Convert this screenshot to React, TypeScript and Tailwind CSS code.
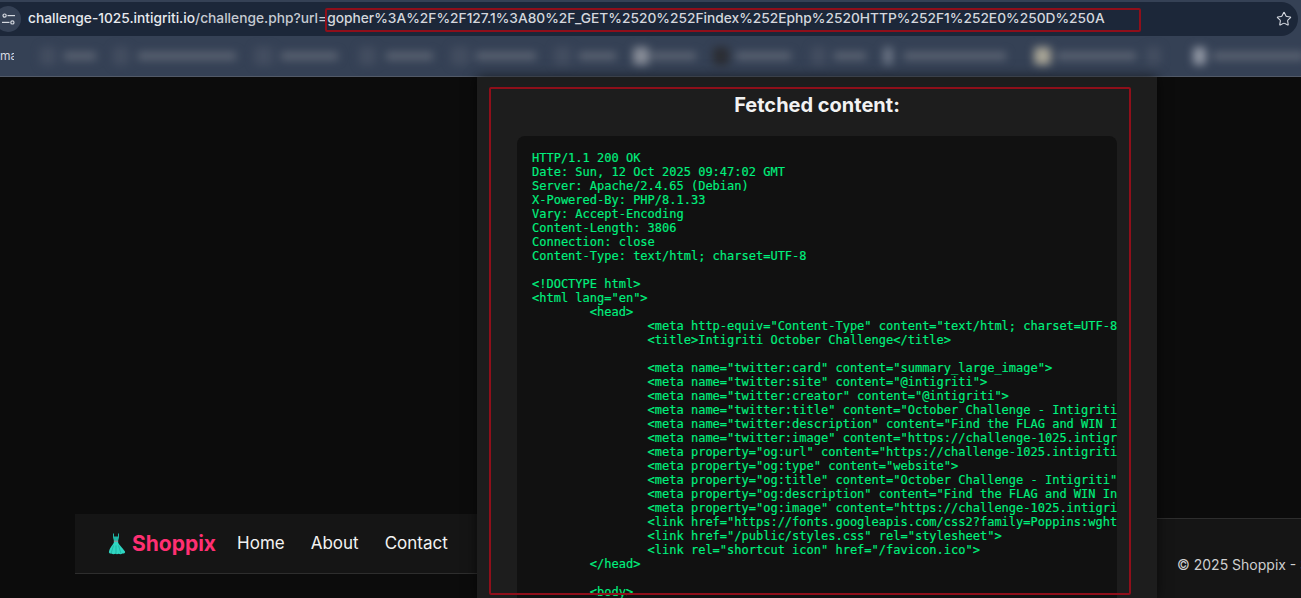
import React from "react";
import { Star } from "lucide-react";

const MONO = "font-['DejaVu_Sans_Mono',monospace]";
const HEADING = "font-['Inter','Noto_Sans',sans-serif]";

// blurred bookmarks, left to right
const BOOKMARKS_LEFT = [
  { icon: "ml-[26px] w-[16px] bg-[#434d60]", text: "ml-[8px] w-[32px]" },
  { icon: "ml-[17px] w-[16px] bg-[#434d60]", text: "ml-[9px] w-[98px]" },
  { icon: "ml-[18px] w-[19px] bg-[#434d60]", text: "ml-[8px] w-[57px]" },
  { icon: "ml-[21px] w-[17px] bg-[#434d60]", text: "ml-[10px] w-[47px]" },
  { icon: "ml-[18px] w-[18px] bg-[#434d60]", text: "ml-[7px] w-[60px]" },
  { icon: "ml-[18px] w-[17px] bg-[#434d60]", text: "ml-[8px] w-[37px]" },
  { icon: "ml-[17px] w-[16px] bg-[#878c97]", text: "ml-[2px] w-[45px]" },
  { icon: "ml-[17px] w-[16px] bg-[#2b2d33]", text: "ml-[7px] w-[55px]" },
  { icon: "ml-[20px] w-[15px] bg-[#434d60]", text: "ml-[8px] w-[32px]" },
  { icon: "ml-[17px] w-[10px] bg-[#6a7383]", text: "ml-[11px] w-[102px]" },
  { icon: "ml-[28px] w-[17px] bg-[#a8a496]", text: "ml-[6px] w-[79px]" },
  { icon: "ml-[10px] w-[15px] bg-[#434d60]", text: "ml-[0px] w-[0px]" },
  { icon: "ml-[32px] w-[13px] bg-[#9096a3]", text: "ml-[7px] w-[91px]" },
];

const RESPONSE = `HTTP/1.1 200 OK
Date: Sun, 12 Oct 2025 09:47:02 GMT
Server: Apache/2.4.65 (Debian)
X-Powered-By: PHP/8.1.33
Vary: Accept-Encoding
Content-Length: 3806
Connection: close
Content-Type: text/html; charset=UTF-8

<!DOCTYPE html>
<html lang="en">
\t<head>
\t\t<meta http-equiv="Content-Type" content="text/html; charset=UTF-8">
\t\t<title>Intigriti October Challenge</title>

\t\t<meta name="twitter:card" content="summary_large_image">
\t\t<meta name="twitter:site" content="@intigriti">
\t\t<meta name="twitter:creator" content="@intigriti">
\t\t<meta name="twitter:title" content="October Challenge - Intigriti">
\t\t<meta name="twitter:description" content="Find the FLAG and WIN Intigriti swag">
\t\t<meta name="twitter:image" content="https://challenge-1025.intigriti.io/share.png">
\t\t<meta property="og:url" content="https://challenge-1025.intigriti.io/">
\t\t<meta property="og:type" content="website">
\t\t<meta property="og:title" content="October Challenge - Intigriti">
\t\t<meta property="og:description" content="Find the FLAG and WIN Intigriti swag">
\t\t<meta property="og:image" content="https://challenge-1025.intigriti.io/share.png">
\t\t<link href="https://fonts.googleapis.com/css2?family=Poppins:wght@400;600&display=swap" rel="stylesheet">
\t\t<link href="/public/styles.css" rel="stylesheet">
\t\t<link rel="shortcut icon" href="/favicon.ico">
\t</head>

\t<body>
\t\t<div class="container">`;

function TuneIcon() {
  return (
    <svg width="13" height="12" viewBox="0 0 13 12" fill="none" stroke="#d5d9e0" strokeWidth="1.2">
      <circle cx="2.6" cy="2.6" r="1.6" />
      <path d="M5.500 2.600H13" />
      <circle cx="10.400" cy="9.400" r="1.600" />
      <path d="M0 9.400h7.500" />
    </svg>
  );
}

function DressIcon() {
  return (
    <svg width="22" height="22" viewBox="0 0 22 22">
      <path d="M8 0.500v4l1 3.500h4l1-3.500v-4h-1v3H9v-3z" fill="#1fb5a5" />
      <rect x="8.800" y="7.600" width="4.400" height="1.600" fill="#7d9a9e" />
      <path d="M9 9h4c.6 2.500 4 5 7 9.500.5 1.200-.8 2.300-2.500 2-1 .9-2.800.9-3.800.3-1 .6-2.400.6-3.400 0-1 .6-2.800.6-3.800-.3-1.700.3-3-.8-2.500-2C5 14 8.400 11.500 9 9z" fill="#2fd6c2" />
      <path d="M8.500 12.500l-2.500 8M11 12.500V21M13.500 12.500l2.500 8" stroke="#1aa999" strokeWidth=".7" />
    </svg>
  );
}

function BrowserChrome() {
  return (
    <div className="h-[77px] bg-[#354155] border-b border-[#525a68] overflow-hidden">
      <div className="h-[36px] pt-[2px]">
        <div className="relative h-[34px] mr-[3px] rounded-r-[17px] bg-[#1c2739] flex items-center">
          <div className="ml-[-5px] w-[26px] h-[26px] rounded-full bg-[#354155] flex items-center justify-center shrink-0">
            <TuneIcon />
          </div>
          <div className="ml-[7px] mt-[-1px] text-[13.75px] font-medium whitespace-nowrap font-['Inter',sans-serif] text-[#e8eaee]">
            challenge-1025.intigriti.io
            <span className="text-[#c6cad2]">/challenge.php?url=</span>
            <span className="text-[#d4d7dd]">gopher%3A%2F%2F127.1%3A80%2F_GET%2520%252Findex%252Ephp%2520HTTP%252F1%252E0%250D%250A</span>
          </div>
          <Star size={16} strokeWidth={1.6} className="absolute left-[1276px] top-[9px] text-[#d5d9e0]" />
          <div className="absolute left-[325px] top-[6px] w-[816px] h-[24px] border-2 border-[#8f0f1a] rounded-[2px]" />
        </div>
      </div>
      <div className="h-[40px] flex items-center">
        <span className="w-[14px] shrink-0 text-[12px] font-['Inter',sans-serif] text-[#d5d9e0] overflow-hidden">mas</span>
        <div className="flex items-center blur-[4px]">
          {BOOKMARKS_LEFT.map((b, i) => (
            <React.Fragment key={i}>
              <span className={`${b.icon} h-[18px] rounded-[4px] shrink-0`} />
              <span className={`${b.text} h-[8px] bg-[#5c6473] shrink-0`} />
            </React.Fragment>
          ))}
        </div>
      </div>
    </div>
  );
}

export default function App() {
  return (
    <div className="w-[1301px] h-[598px] overflow-hidden bg-[#0c0c0c] flex flex-col">
      <BrowserChrome />
      <div className="flex-1 flex min-h-0">
        <div className="w-[477px] shrink-0 pl-[75px] pt-[437px]">
          <nav className="h-[60px] bg-[#151515] border-b border-[#2e2e2e] flex items-center pl-[30px] text-[#f2f2f2] whitespace-nowrap">
            <DressIcon />
            <span className={`${HEADING} ml-[5px] text-[21px] font-bold text-[#ff2f72]`}>Shoppix</span>
            <a className={`${HEADING} ml-[21px] text-[17px]`}>Home</a>
            <a className={`${HEADING} ml-[26px] text-[17px]`}>About</a>
            <a className={`${HEADING} ml-[26px] text-[17px]`}>Contact</a>
          </nav>
        </div>

        <main className="relative z-10 w-[680px] shrink-0 bg-[#1d1d1d] shadow-[0_0_12px_rgba(0,0,0,0.6)] px-[40px] overflow-hidden">
          <h2 className={`${HEADING} text-center text-[20px] font-bold leading-[24px] mt-[16px] text-[#f2f2f2]`}>Fetched content:</h2>
          <pre className={`${MONO} [tab-size:8] [-webkit-text-stroke:0.15px] mt-[19px] h-[500px] overflow-hidden rounded-[8px] bg-[#111111] p-[15px] text-[12px] leading-[14px] text-[#00f07e]`}>
            {RESPONSE}
          </pre>
          <div className="absolute left-[12px] top-[10px] w-[642px] h-[508px] border-2 border-[#8f0f1a] rounded-[2px]" />
        </main>

        <div className="flex-1 min-w-0 pt-[441px]">
          <footer className="h-[80px] bg-[#151515] border-t border-[#2e2e2e] pl-[20px] pt-[36px] whitespace-nowrap overflow-hidden">
            <span className={`${HEADING} block text-[14px] leading-[20px] text-[#cfcfcf]`}>© 2025 Shoppix - Secure Shopping</span>
          </footer>
        </div>
      </div>
    </div>
  );
}
